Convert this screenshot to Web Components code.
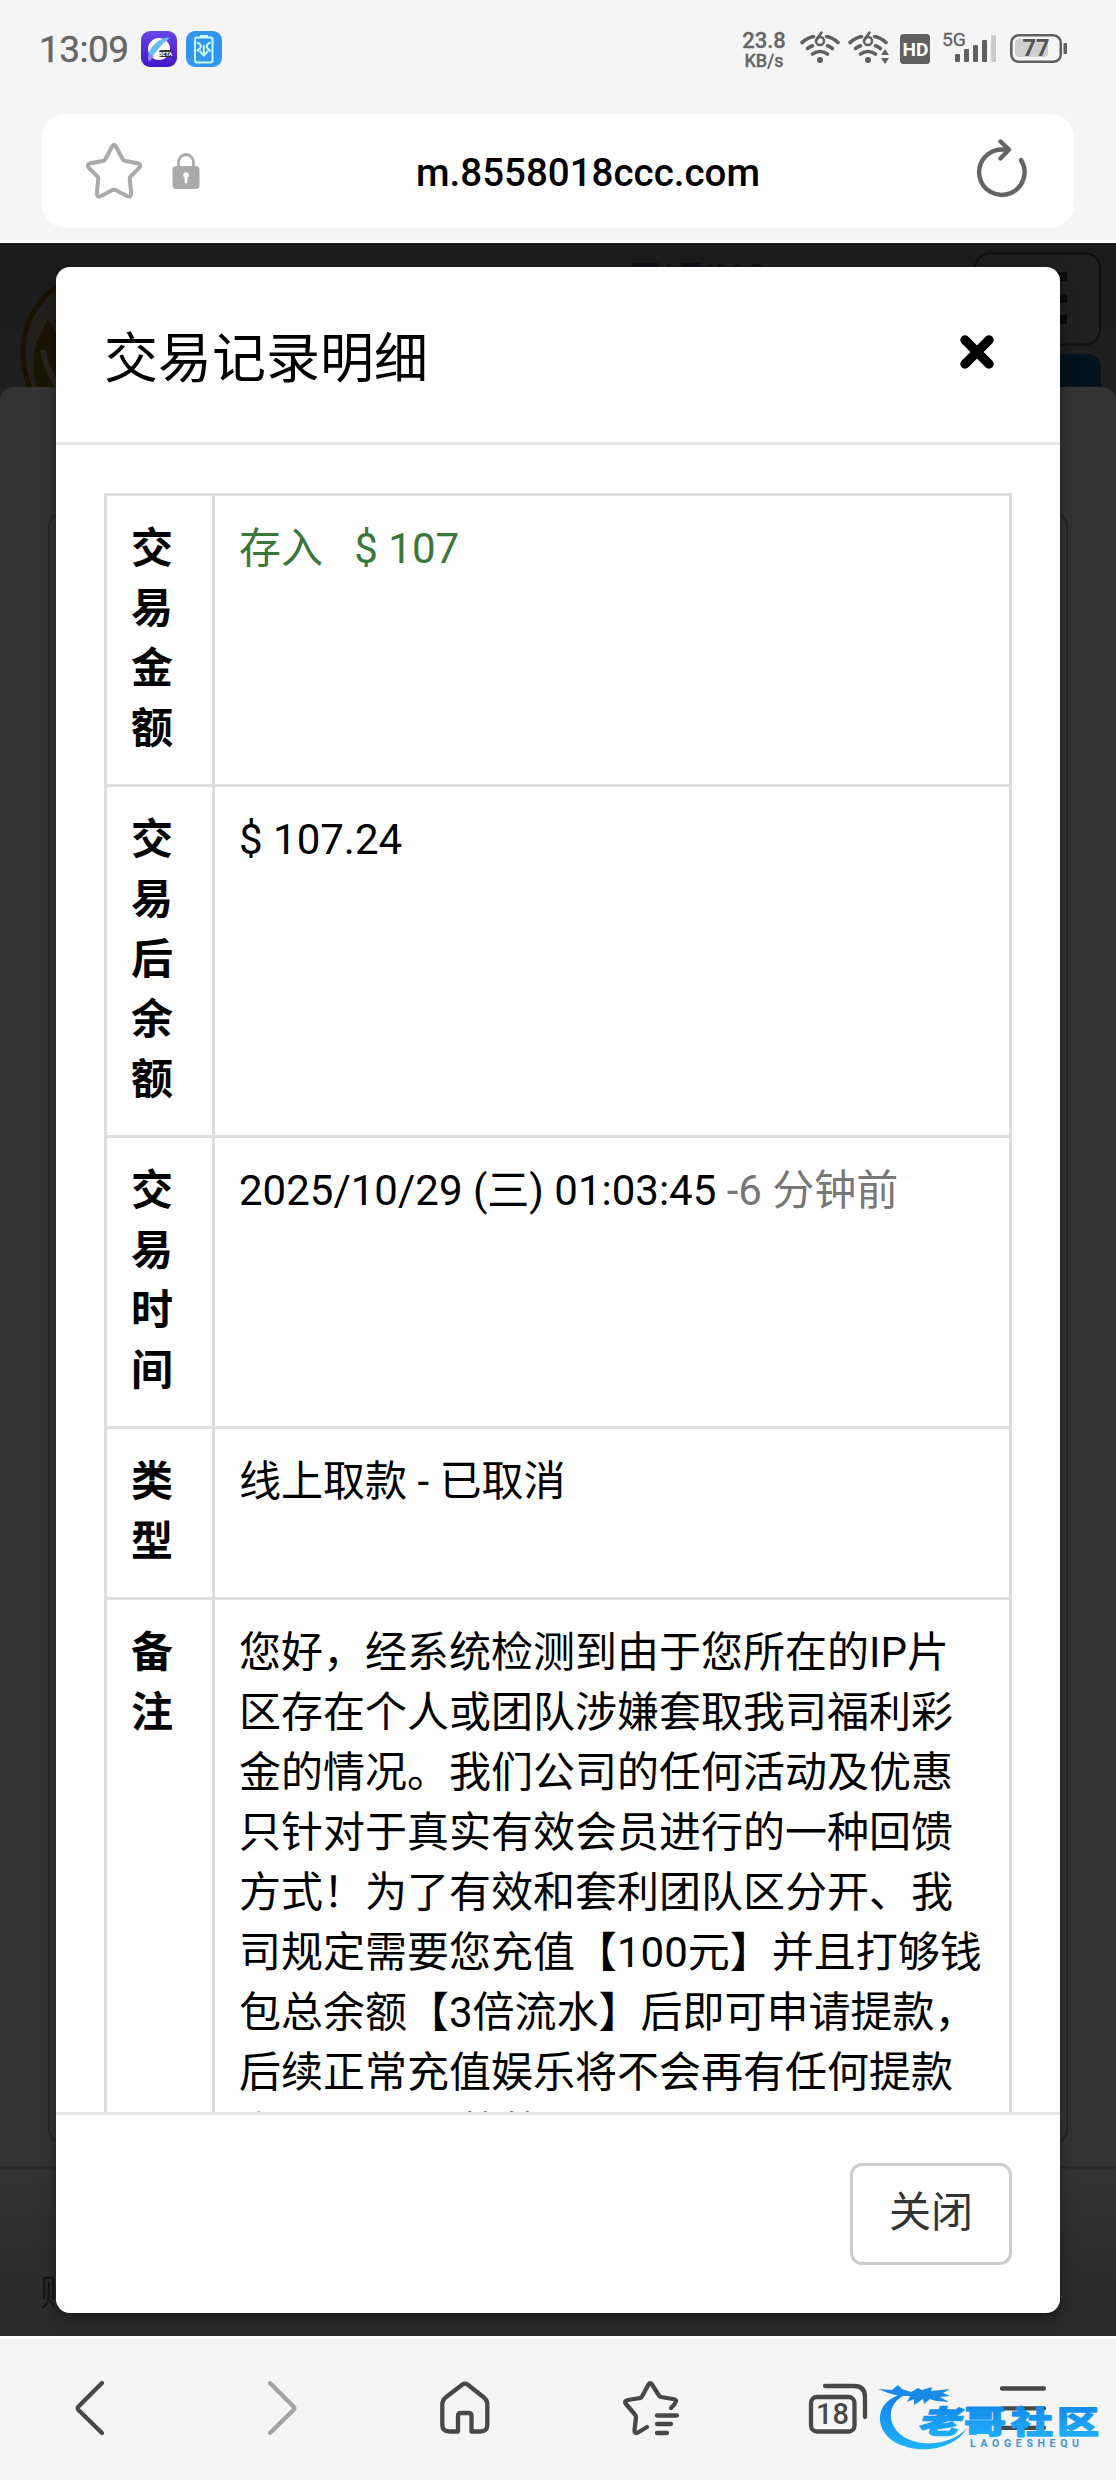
<!DOCTYPE html>
<html lang="zh-CN">
<head>
<meta charset="utf-8">
<title>交易记录明细</title>
<style>
html,body{margin:0;padding:0}
body{width:1116px;height:2480px;overflow:hidden;background:#f5f5f5;font-family:Roboto,"Noto Sans CJK SC",sans-serif;color:#000}
</style>
</head>
<body>
<phone-screen>
  <status-bar></status-bar>
  <address-bar>m.8558018ccc.com</address-bar>
  <page-stage>
    <page-backdrop></page-backdrop>
    <detail-modal>
      <span slot="title">交易记录明细</span>
      <detail-table>
        <detail-row style="--h:288px"><span slot="label">交易金额</span><span style="color:#3c763d;white-space:pre">存入   $ 107</span></detail-row>
        <detail-row style="--h:348px"><span slot="label">交易后余额</span>$ 107.24</detail-row>
        <detail-row style="--h:288px"><span slot="label">交易时间</span>2025/10/29 (三) 01:03:45 <span style="color:#777">-6 分钟前</span></detail-row>
        <detail-row style="--h:168px"><span slot="label">类型</span>线上取款 - 已取消</detail-row>
        <detail-row style="--h:588px"><span slot="label">备注</span>您好，经系统检测到由于您所在的IP片<br>区存在个人或团队涉嫌套取我司福利彩<br>金的情况。我们公司的任何活动及优惠<br>只针对于真实有效会员进行的一种回馈<br>方式！为了有效和套利团队区分开、我<br>司规定需要您充值【100元】并且打够钱<br>包总余额【3倍流水】后即可申请提款，<br>后续正常充值娱乐将不会再有任何提款<br>上问题了。谢谢</detail-row>
      </detail-table>
      <span slot="action">关闭</span>
    </detail-modal>
  </page-stage>
  <tool-bar></tool-bar>
</phone-screen>
<script>
const define = (name, html) => customElements.define(name, class extends HTMLElement {
  constructor() {
    super();
    this.attachShadow({ mode: 'open' }).innerHTML = html;
  }
});

define('phone-screen', `
<style>:host{display:flex;flex-direction:column;width:1116px;height:2480px;background:#f5f5f5}</style>
<slot></slot>`);

define('status-bar', `
<style>
:host{display:flex;box-sizing:border-box;height:98px;padding:0 48px 0 39px;align-items:center;color:#666}
.time{font-size:37px;letter-spacing:-.5px;-webkit-text-stroke:.4px #666;width:102px}
.app{display:block;margin-right:9px}
.grow{flex:1}
.speed{font-weight:500;text-align:center;width:46px;margin-right:11px;-webkit-text-stroke:.3px #666}
.speed b{display:block;font-weight:500;font-size:22px;line-height:22px}
.speed i{display:block;font-style:normal;font-size:18px;line-height:17px}
svg{display:block}
</style>
<span class="time">13:09</span>
<svg class="app" width="36" height="36" viewBox="0 0 36 36">
  <defs><linearGradient id="p" x2="0" y2="1"><stop stop-color="#6945e4"/><stop offset="1" stop-color="#4217cc"/></linearGradient></defs>
  <rect width="36" height="36" rx="9" fill="url(#p)"/><circle cx="18" cy="18" r="11" fill="#fff"/>
  <path d="M7 28Q7 18 16 11Q24 5 29 7Q23 11 18 17Q12 24 9 30Z" fill="#67bdf0"/><path d="M7 29l2-5 4 1-5 5z" fill="#a47cf3"/>
  <rect x="18" y="19" width="13" height="7" rx="2" fill="#333"/><text x="24.5" y="24.8" font-size="5.5" font-weight="700" fill="#fff" text-anchor="middle">BETA</text>
</svg>
<svg class="app" width="36" height="36" viewBox="0 0 36 36" fill="none" stroke="#c9fbff" stroke-width="2">
  <rect width="36" height="36" rx="9" fill="#3396ee" stroke="none"/><rect x="9" y="6.500" width="17.500" height="25" rx="2"/><path d="M14 5.500h8" stroke-width="3"/>
  <path d="M11 11.500q5.500 2 3 6q-2 1-3 3M24.500 11.500q-5.500 2-3 6q2 1 3 3M17.800 14v9M13.500 20l4.300 4.500 4.300-4.500"/>
</svg>
<span class="grow"></span>
<span class="speed"><b>23.8</b><i>KB/s</i></span>
<svg width="270" height="40" viewBox="798 29 270 40" fill="none" stroke="#606060">
  <g id="w" stroke-width="3.600" stroke-linecap="round">
    <path d="M802 42.500q6-5 11.500-6M826.500 36.500q6 1 11.500 6M807.500 48.500q3-2 5-2.700M827.500 45.800q2.500.7 5 2.700M812.500 54q7.500-5 15 0"/>
    <circle cx="820" cy="60" r="3" fill="#606060" stroke="none"/><path d="M821.500 32.500l-5 7.500" stroke-width="2.500"/><circle cx="820" cy="41" r="4" stroke-width="2.500"/>
  </g>
  <use href="#w" x="48"/>
  <path d="M881 55l4-6 4 6zM881 58h8l-4 6z" fill="#606060" stroke="none"/>
  <rect x="900" y="34" width="30" height="30" rx="3.500" fill="#606060" stroke="none"/>
  <text x="915.500" y="55.500" text-anchor="middle" font-size="18.500" font-weight="700" textLength="26" lengthAdjust="spacingAndGlyphs" fill="#fff" stroke="none">HD</text>
  <text x="942" y="46" font-size="19" textLength="24" lengthAdjust="spacingAndGlyphs" fill="#606060" stroke="#606060" stroke-width=".3">5G</text>
  <g stroke="none" fill="#606060"><rect x="955" y="54" width="5" height="8" rx="1"/><rect x="964" y="49" width="5" height="13" rx="1"/><rect x="973" y="45" width="5" height="17" rx="1"/><rect x="982" y="40" width="5" height="22" rx="1"/><rect x="991" y="35" width="5" height="27" rx="1" fill="#ccc"/></g>
  <rect x="1015" y="39" width="33" height="18" rx="4" fill="#d0d0d0" stroke="none"/>
  <rect x="1011.300" y="35.300" width="49.500" height="26.500" rx="7.500" stroke-width="2.600"/>
  <rect x="1063.500" y="43" width="3.500" height="11" rx="1" fill="#606060" stroke="none"/>
  <text x="1036" y="56" text-anchor="middle" font-size="24" font-weight="700" textLength="27" lengthAdjust="spacingAndGlyphs" fill="#555" stroke="none">77</text>
</svg>`);

define('address-bar', `
<style>
:host{display:flex;box-sizing:border-box;height:114px;margin:16px 42px 12px;padding:0 44px;align-items:center;background:#fff;border-radius:24px}
.url{flex:1;text-align:center;font-weight:500;font-size:38.5px;line-height:44px;margin-top:3px;white-space:nowrap}
svg{display:block;fill:none;stroke-linecap:round;stroke-linejoin:round;flex:none}
.l{width:160px}.r{width:100px}
</style>
<svg class="l" width="160" height="70" viewBox="86 136 160 70">
  <path d="M111.800 147Q114 142.500 116.200 147L122.500 159Q123 160.300 124.500 160.700L137.500 163.200Q142 164.500 139.200 167.800L130.500 176.500Q129.500 177.700 129.800 179.500L131.200 193.500Q131 197.800 127 196L116 190.300Q114 189.300 112 190.300L101 196Q97 197.800 96.800 193.500L98.200 179.500Q98.500 177.700 97.500 176.500L88.800 167.800Q86 164.500 90.500 163.200L103.500 160.700Q105 160.300 105.500 159Z" stroke="#aaa" stroke-width="4"/>
  <path d="M178.500 168v-5.500a7.500 8 0 0 1 15 0v5.500" stroke="#aaa" stroke-width="2.800"/>
  <rect x="172.500" y="166" width="27" height="23" rx="4" fill="#aaa"/><path d="M186 175.500v6.500" stroke="#fff" stroke-width="2.800"/><circle cx="186" cy="175" r="2.800" fill="#fff"/>
</svg>
<div class="url"><slot></slot></div>
<svg class="r" width="100" height="70" viewBox="930 136 100 70" stroke="#646464" stroke-width="4.400">
  <path d="M1008 149.500H1002.500A22.700 22.700 0 1 0 1021 160M1000.500 141.500L1009 149.500L1000.500 158.500"/>
</svg>`);

define('page-stage', `
<style>
:host{display:block;position:relative;box-sizing:border-box;height:2099px;border-top:3px solid #fff;border-bottom:3px solid #fff;overflow:hidden;background:#1d1d1d}
</style><slot></slot>`);

define('page-backdrop', `
<style>
:host{display:block;height:2093px}
svg{display:block}
</style>
<svg width="1116" height="2093" viewBox="0 243 1116 2093">
  <defs><linearGradient id="g" x2="0" y2="1"><stop stop-color="#333"/><stop offset="1" stop-color="#292929"/></linearGradient>
  <linearGradient id="h" x2="0" y2="1"><stop stop-color="#1b1b1b"/><stop offset="1" stop-color="#202020"/></linearGradient></defs>
  <rect y="243" width="1116" height="170" fill="url(#h)"/>
  <ellipse cx="82" cy="353" rx="59" ry="72" fill="#231f1d" stroke="#191200" stroke-width="5"/>
  <path d="M37 340Q45 328 47 319Q57 330 60 345V390H37Q30 365 37 340Z" fill="#1b1300"/>
  <path d="M43 350Q47 374 62 392" stroke="#28231e" stroke-width="6" fill="none"/>
  <path d="M632 265h27M667 266h4M681 265h19M708 266h4M718 266h6M735 266h5M752 266h9" stroke="#0e1018" stroke-width="4"/>
  <rect x="975" y="253.500" width="125" height="91" rx="15" fill="#202020" stroke="#101010" stroke-width="2"/>
  <path d="M1030 276.500h37M1030 298.500h37M1030 319.500h37" stroke="#0a0a0a" stroke-width="9"/>
  <rect x="900" y="354" width="201" height="60" rx="14" fill="#04131b"/>
  <path d="M0 401a14 14 0 0 1 14-14H1102a14 14 0 0 1 14 14V2168H0Z" fill="#333"/>
  <rect x="49" y="514" width="1018" height="1628" rx="12" fill="#333" stroke="#252525" stroke-width="2"/>
  <rect y="2167" width="1116" height="169" fill="url(#g)"/><path d="M0 2167.500h1116" stroke="#292929" stroke-width="2"/>
  <text x="40" y="2306" font-size="36" fill="#151515">账</text>
</svg>`);

define('detail-modal', `
<style>
:host{display:flex;flex-direction:column;position:absolute;left:56px;top:24px;width:1004px;height:2046px;background:#fff;border-radius:14px;overflow:hidden;box-shadow:0 5px 15px rgba(0,0,0,.35)}
header{box-sizing:border-box;height:178px;flex:none;border-bottom:3px solid #e5e5e5;padding:0 66px 0 48px;display:flex;justify-content:space-between;align-items:center}
h4{margin:10px 0 0;font-weight:400;font-size:54px;line-height:60px}
header svg{display:block;margin-bottom:5px}
main{flex:1;min-height:0;overflow:hidden;padding:48px 48px 0}
footer{box-sizing:border-box;height:201px;flex:none;border-top:3px solid #e5e5e5;padding:0 48px;display:flex;justify-content:flex-end;align-items:center}
button{box-sizing:border-box;width:162px;height:102px;border:3px solid #ccc;border-radius:12px;background:#fff;color:#333;font:400 42px/60px Roboto,"Noto Sans CJK SC",sans-serif;padding:0 0 2px;display:block}
</style>
<header><h4><slot name="title"></slot></h4>
<svg width="34" height="34" viewBox="0 0 34 34"><path d="M5 5l24 24M29 5L5 29" stroke="#000" stroke-width="9.500" stroke-linecap="round"/></svg></header>
<main><slot></slot></main>
<footer><button><slot name="action"></slot></button></footer>`);

define('detail-table', `
<style>:host{display:flex;flex-direction:column;box-sizing:border-box;width:908px;border:3px solid #ddd;border-bottom:0}</style><slot></slot>`);

define('detail-row', `
<style>
:host{display:flex;box-sizing:content-box;height:var(--h);border-bottom:3px solid #ddd;font-size:42px;line-height:60px}
.th{box-sizing:border-box;width:108px;flex:none;border-right:3px solid #ddd;padding:23px 39px 0 24px;font-weight:700;word-break:break-all}
.td{flex:1;padding:23px 0 0 24px;white-space:nowrap}
</style>
<div class="th"><slot name="label"></slot></div><div class="td"><slot></slot></div>`);

define('tool-bar', `
<style>:host{display:block;height:141px}svg{display:block}</style>
<svg width="1116" height="141" viewBox="0 2339 1116 141" fill="none" stroke="#484848" stroke-width="4.300" stroke-linecap="round" stroke-linejoin="round">
  <defs><linearGradient id="b" x2="0" y2="1"><stop stop-color="#0f7fe6"/><stop offset="1" stop-color="#20b4fb"/></linearGradient></defs>
  <path d="M102 2383L78.500 2406.500Q77 2408.200 78.500 2410L102 2433"/>
  <path d="M270 2383L293.500 2406.500Q295 2408.200 293.500 2410L270 2433" stroke="#a3a3a3"/>
  <path d="M462.500 2384.500Q465 2382.800 467.500 2384.500L484 2397.500Q487.300 2400.500 487.300 2404V2424.500Q487.300 2431.500 480.500 2431.500H471.500V2416Q471.500 2413 468.500 2413H461Q458 2413 458 2416V2431.500H449.500Q442.300 2431.500 442.300 2424.500V2404Q442.300 2400.500 445.500 2397.500Z"/>
  <path d="M671 2408Q676 2403 676 2401Q676 2399.500 673 2399L661 2397Q659.500 2396.500 659 2395.500L652 2384.500Q650.300 2382 648.500 2384.500L642 2396.500Q641.500 2397.800 640 2398L628 2400Q623.500 2401 626 2404L634.500 2414Q636 2415.500 636 2417.500L634.500 2430Q634.500 2434.500 638 2432.500L647 2427M657 2415.500H677M657 2424H671M657 2433H667"/>
  <rect x="811" y="2397" width="43.500" height="34.500" rx="6"/><path d="M825 2386H854Q865 2386 865 2397V2417"/>
  <text x="832.500" y="2424" text-anchor="middle" font-size="29" font-weight="500" fill="#484848" stroke="none" textLength="33">18</text>
  <path d="M1002 2388.500h42M1002 2408.300h42M1002 2427.800h42"/>
  <path d="M911 2393C875 2395 872 2427 893 2441C917 2456 955 2450 967 2428C954 2443 924 2449 904 2437C885 2425 886 2399 911 2393Z" fill="url(#b)" stroke="none"/>
  <path d="M878 2389L892 2390L898 2385L902 2389L911 2392L918 2388L922 2390L932 2387L931 2391L950 2389L943 2393L950 2396L940 2397L949 2402L936 2401L930 2399L924 2404L923 2399L914 2405L914 2399L907 2402L910 2396L899 2396L888 2393Z" fill="#188be9" stroke="none"/>
  <g fill="url(#b)" stroke="url(#b)" stroke-width="1.300" font-family="Noto Sans CJK SC" font-weight="900" font-size="31">
    <text x="917" y="2432.500" textLength="42" lengthAdjust="spacingAndGlyphs" font-style="italic">老</text><text x="964" y="2432.500" textLength="42" lengthAdjust="spacingAndGlyphs">哥</text><text x="1011" y="2432.500" textLength="42" lengthAdjust="spacingAndGlyphs">社</text><text x="1057" y="2432.500" textLength="42" lengthAdjust="spacingAndGlyphs">区</text>
  </g>
  <text x="970" y="2446.500" font-size="10.500" textLength="109" fill="#3f94d4" stroke="none" font-weight="700">LAOGESHEQU</text>
</svg>`);
</script>
</body>
</html>
